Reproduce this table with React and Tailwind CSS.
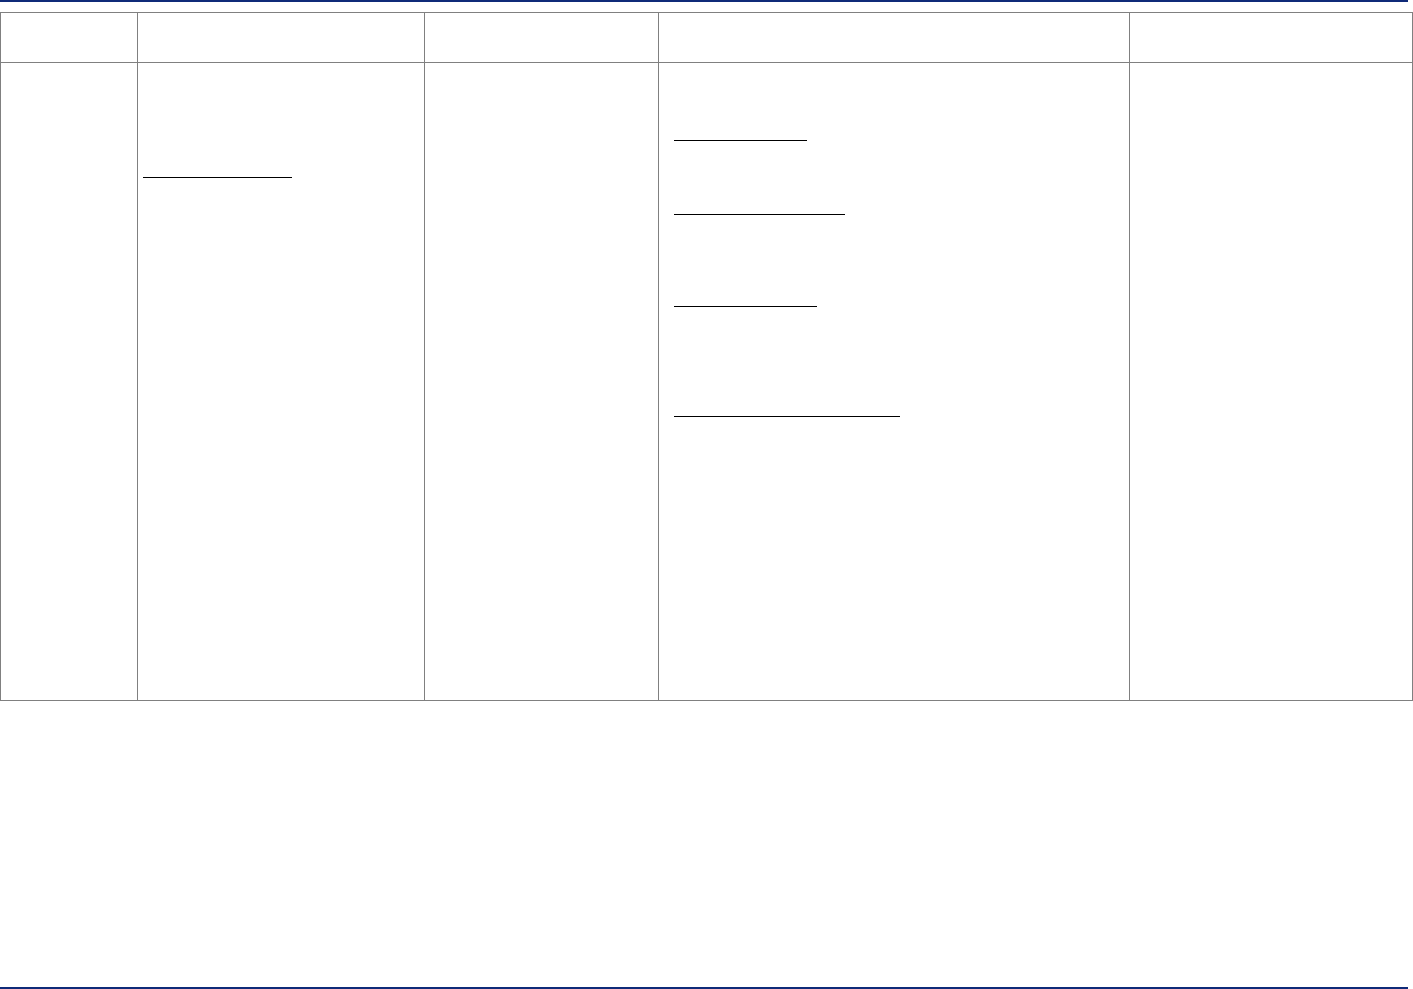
export default function App() {
  const links = [
    { top: "mt-[77px]", width: "w-[133px]" },
    { top: "mt-[73px]", width: "w-[171px]" },
    { top: "mt-[91px]", width: "w-[143px]" },
    { top: "mt-[109px]", width: "w-[226px]" },
  ];

  return (
    <div className="w-[1413px] h-[989px] bg-white font-['Liberation_Sans',Arial,sans-serif] flex flex-col">
      {/* Top rule */}
      <div className="w-[1408px] h-[2px] bg-[#0f2a78]" />

      {/* Table */}
      <div className="mt-[10px] w-[1413px] border border-[#808080] grid grid-cols-[136px_287px_234px_471px_283px] grid-rows-[50px_637px]">
        {/* Header row */}
        <div className="border-b border-[#808080]" />
        <div className="border-b border-l border-[#808080]" />
        <div className="border-b border-l border-[#808080]" />
        <div className="border-b border-l border-[#808080]" />
        <div className="border-b border-l border-[#808080]" />

        {/* Body row */}
        <div />
        <div className="border-l border-[#808080] pl-[5px]">
          <div className="mt-[114px] w-[149px] h-px bg-black" />
        </div>
        <div className="border-l border-[#808080]" />
        <div className="border-l border-[#808080] pl-[15px] flex flex-col">
          {links.map((l, i) => (
            <div key={i} className={`${l.top} ${l.width} h-px bg-black`} />
          ))}
        </div>
        <div className="border-l border-[#808080]" />
      </div>

      {/* Bottom rule */}
      <div className="mt-auto w-[1408px] h-[2px] bg-[#0f2a78]" />
    </div>
  );
}
